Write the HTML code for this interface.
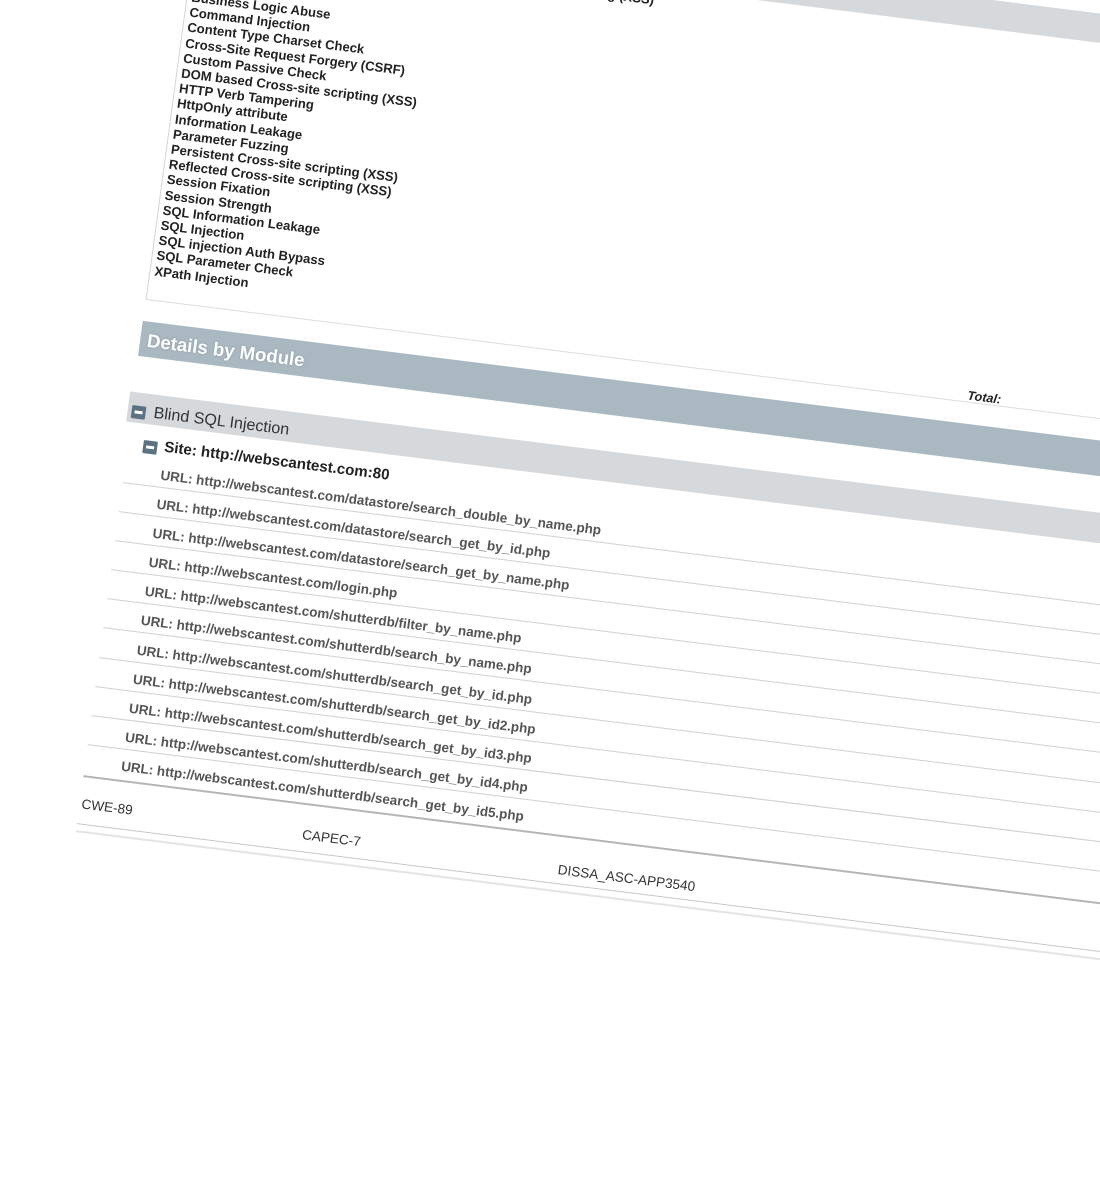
<!DOCTYPE html>
<html><head><meta charset="utf-8"><style>
html,body{margin:0;padding:0;background:#fff;overflow:hidden;width:1100px;height:1000px}
#p{position:absolute;left:0;top:0;width:1400px;height:1000px;transform:matrix(1,0.125,-0.135,1,0,0);transform-origin:0 0;font-family:"Liberation Sans",Arial,sans-serif}
.a{position:absolute;white-space:nowrap}
.li{font-weight:bold;font-size:13px;line-height:15.2px;color:#222}
.url{font-weight:bold;font-size:13.4px;color:#555;line-height:15px}
.ln{position:absolute;left:185px;width:1300px;height:1px;background:#d0d0d0}
.ic{position:absolute;width:14px;height:13px;background:#5b7282;border-radius:1px}
.ic:after{content:"";position:absolute;left:3px;right:3px;top:5px;height:3px;background:#fff}
</style></head><body><div id="p">
<div class="a" style="left:183px;top:-122px;width:1300px;height:29px;background:#d5d9dc"></div>
<div class="a li" style="left:330px;top:-78px">Authentication</div>
<div class="a li" style="left:480px;top:-88px">Cross-Site Scripting (XSS)</div>
<div class="a" style="left:183px;top:-40px;width:1px;height:316px;background:#d5d5d5"></div>
<div class="a li" style="left:188px;top:-34px">Business Logic Abuse<br>Command Injection<br>Content Type Charset Check<br>Cross-Site Request Forgery (CSRF)<br>Custom Passive Check<br>DOM based Cross-site scripting (XSS)<br>HTTP Verb Tampering<br>HttpOnly attribute<br>Information Leakage<br>Parameter Fuzzing<br>Persistent Cross-site scripting (XSS)<br>Reflected Cross-site scripting (XSS)<br>Session Fixation<br>Session Strength<br>SQL Information Leakage<br>SQL Injection<br>SQL injection Auth Bypass<br>SQL Parameter Check<br>XPath Injection</div>
<div class="ln" style="left:183px;top:276px;background:#ddd"></div>
<div class="a" style="left:183px;top:298px;width:1300px;height:35px;background:#aab8c2"></div>
<div class="a" style="left:190px;top:306px;font-size:18.5px;font-weight:bold;color:#fff;text-shadow:0 0 2px #8a98a2">Details by Module</div>
<div class="a" style="left:1004px;top:263px;font-size:12.5px;font-weight:bold;font-style:italic;color:#222">Total:</div>
<div class="a" style="left:180px;top:369px;width:1300px;height:30px;background:#d5d9dc"></div>
<div class="ic" style="left:184px;top:382px"></div>
<div class="a" style="left:206px;top:379px;font-size:16px;color:#333">Blind SQL Injection</div>
<div class="ic" style="left:200px;top:415px"></div>
<div class="a" style="left:221px;top:411px;font-size:15px;font-weight:bold;color:#222">Site: http://webscantest.com:80</div>
<div class="a url" style="left:221px;top:440px">URL: http://webscantest.com/datastore/search_double_by_name.php</div>
<div class="a url" style="left:221px;top:469px">URL: http://webscantest.com/datastore/search_get_by_id.php</div>
<div class="a url" style="left:221px;top:498px">URL: http://webscantest.com/datastore/search_get_by_name.php</div>
<div class="a url" style="left:221px;top:527px">URL: http://webscantest.com/login.php</div>
<div class="a url" style="left:221px;top:556px">URL: http://webscantest.com/shutterdb/filter_by_name.php</div>
<div class="a url" style="left:221px;top:585px">URL: http://webscantest.com/shutterdb/search_by_name.php</div>
<div class="a url" style="left:221px;top:615px">URL: http://webscantest.com/shutterdb/search_get_by_id.php</div>
<div class="a url" style="left:221px;top:644px">URL: http://webscantest.com/shutterdb/search_get_by_id2.php</div>
<div class="a url" style="left:221px;top:673px">URL: http://webscantest.com/shutterdb/search_get_by_id3.php</div>
<div class="a url" style="left:221px;top:702px">URL: http://webscantest.com/shutterdb/search_get_by_id4.php</div>
<div class="a url" style="left:221px;top:731px">URL: http://webscantest.com/shutterdb/search_get_by_id5.php</div>
<div class="ln" style="top:459px"></div>
<div class="ln" style="top:488px"></div>
<div class="ln" style="top:517px"></div>
<div class="ln" style="top:546px"></div>
<div class="ln" style="top:575px"></div>
<div class="ln" style="top:604px"></div>
<div class="ln" style="top:634px"></div>
<div class="ln" style="top:663px"></div>
<div class="ln" style="top:692px"></div>
<div class="ln" style="top:721px"></div>
<div class="ln" style="top:752px;height:2px;background:#b5b5b5"></div>
<div class="a" style="left:187px;top:773px;font-size:13.5px;color:#333">CWE-89</div>
<div class="a" style="left:408px;top:776px;font-size:13.5px;color:#333">CAPEC-7</div>
<div class="a" style="left:664px;top:779px;font-size:13.5px;color:#333">DISSA_ASC-APP3540</div>
<div class="ln" style="top:800px;background:#c8c8c8"></div>
<div class="ln" style="top:807px;height:2px;background:#e4e4e4"></div>
</div></body></html>
